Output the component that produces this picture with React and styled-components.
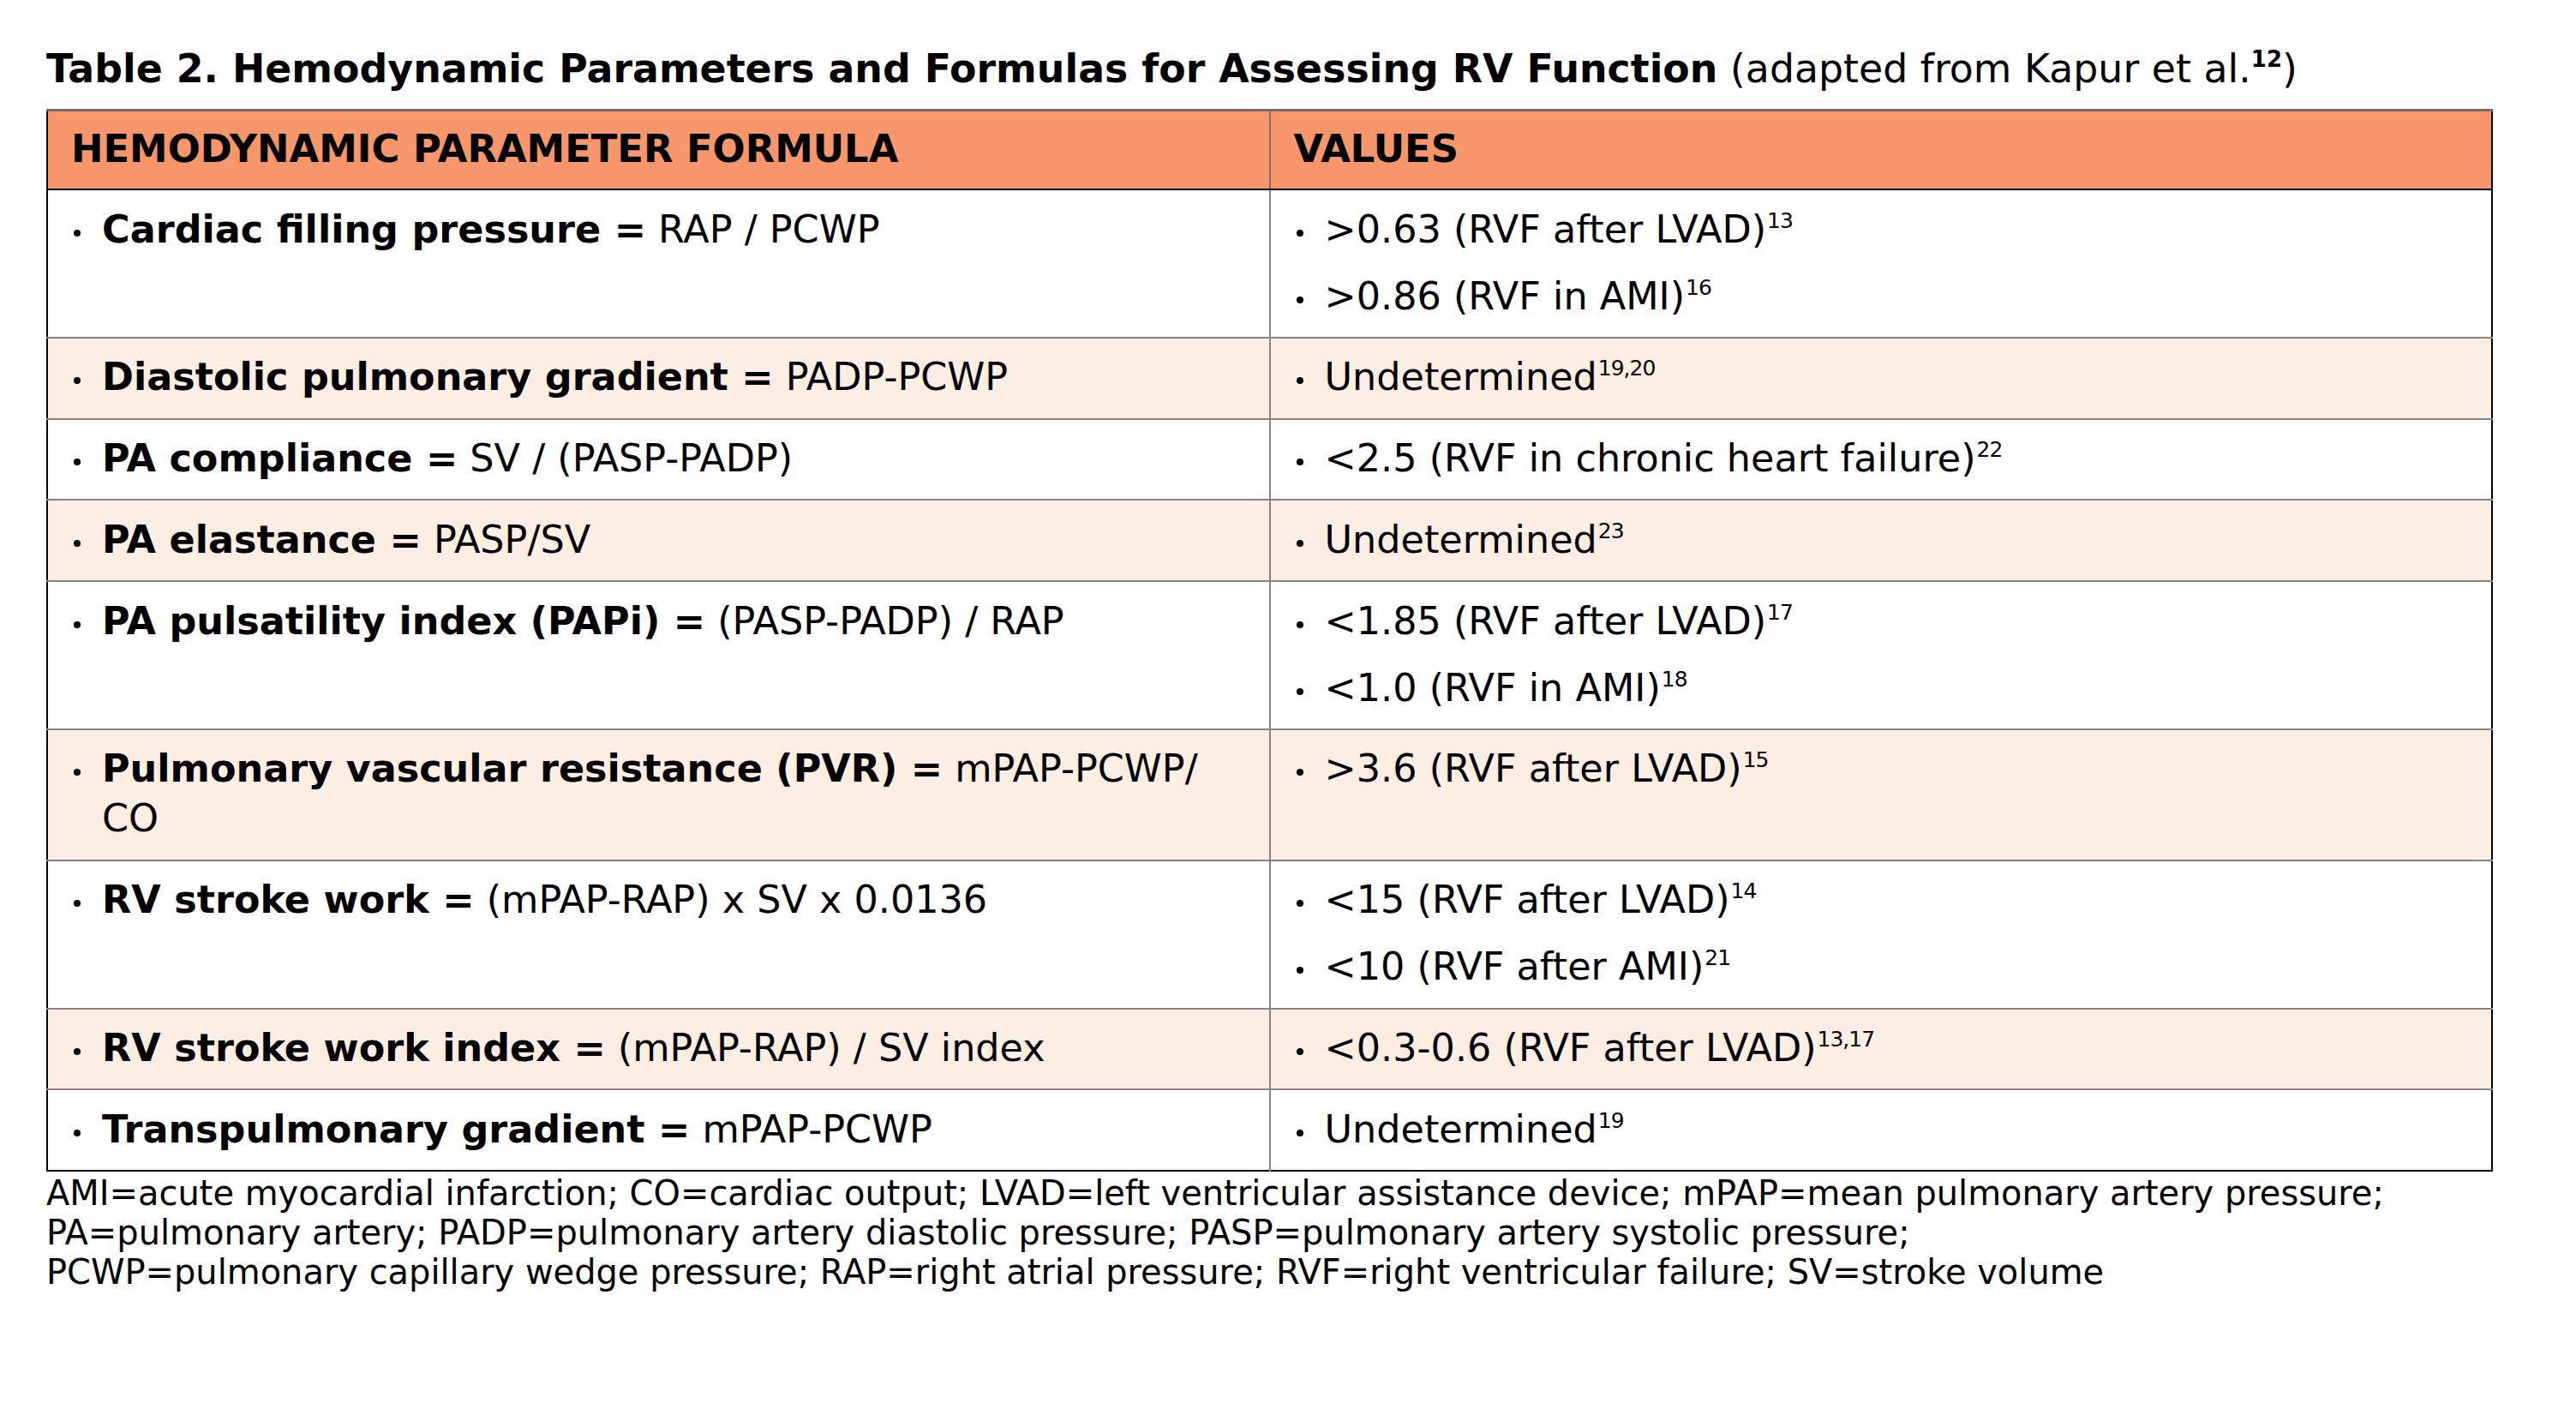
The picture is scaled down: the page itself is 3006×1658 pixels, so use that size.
import React from 'react';
import styled, { createGlobalStyle } from 'styled-components';

const rows = [
    {
        name: 'Cardiac filling pressure =',
        formula: 'RAP / PCWP',
        values: [
            { text: '>0.63 (RVF after LVAD)', ref: '13' },
            { text: '>0.86 (RVF in AMI)', ref: '16' },
        ],
    },
    {
        name: 'Diastolic pulmonary gradient =',
        formula: 'PADP-PCWP',
        values: [{ text: 'Undetermined', ref: '19,20' }],
    },
    {
        name: 'PA compliance =',
        formula: 'SV / (PASP-PADP)',
        values: [{ text: '<2.5 (RVF in chronic heart failure)', ref: '22' }],
    },
    {
        name: 'PA elastance =',
        formula: 'PASP/SV',
        values: [{ text: 'Undetermined', ref: '23' }],
    },
    {
        name: 'PA pulsatility index (PAPi) =',
        formula: '(PASP-PADP) / RAP',
        values: [
            { text: '<1.85 (RVF after LVAD)', ref: '17' },
            { text: '<1.0 (RVF in AMI)', ref: '18' },
        ],
    },
    {
        name: 'Pulmonary vascular resistance (PVR) =',
        formula: 'mPAP-PCWP/ CO',
        values: [{ text: '>3.6 (RVF after LVAD)', ref: '15' }],
    },
    {
        name: 'RV stroke work =',
        formula: '(mPAP-RAP) x SV x 0.0136',
        values: [
            { text: '<15 (RVF after LVAD)', ref: '14' },
            { text: '<10 (RVF after AMI)', ref: '21' },
        ],
    },
    {
        name: 'RV stroke work index =',
        formula: '(mPAP-RAP) / SV index',
        values: [{ text: '<0.3-0.6 (RVF after LVAD)', ref: '13,17' }],
    },
    {
        name: 'Transpulmonary gradient =',
        formula: 'mPAP-PCWP',
        values: [{ text: 'Undetermined', ref: '19' }],
    },
];

const notes = [
    'AMI=acute myocardial infarction; CO=cardiac output; LVAD=left ventricular assistance device; mPAP=mean pulmonary artery pressure;',
    'PA=pulmonary artery; PADP=pulmonary artery diastolic pressure; PASP=pulmonary artery systolic pressure;',
    'PCWP=pulmonary capillary wedge pressure; RAP=right atrial pressure; RVF=right ventricular failure; SV=stroke volume',
];

const App = () => {
    return (
        <>
            <GlobalStyle />
            <Page>
                <Title>
                    <strong>Table 2. Hemodynamic Parameters and Formulas for Assessing RV Function</strong>
                    {' '}(adapted from Kapur et al.<TitleRef>12</TitleRef>)
                </Title>
                <Table>
                    <thead>
                        <tr>
                            <HeadCell>Hemodynamic parameter formula</HeadCell>
                            <HeadCell $right>Values</HeadCell>
                        </tr>
                    </thead>
                    <tbody>
                        {rows.map((row, i) => (
                            <Row key={row.name} $striped={i % 2 === 1}>
                                <Cell>
                                    <List>
                                        <Item>
                                            <Bullet />
                                            <span>
                                                <strong>{row.name}</strong> {row.formula}
                                            </span>
                                        </Item>
                                    </List>
                                </Cell>
                                <Cell $right>
                                    <List>
                                        {row.values.map(value => (
                                            <Item key={value.text}>
                                                <Bullet />
                                                <span>
                                                    {value.text}
                                                    <Ref>{value.ref}</Ref>
                                                </span>
                                            </Item>
                                        ))}
                                    </List>
                                </Cell>
                            </Row>
                        ))}
                    </tbody>
                </Table>
                <Notes>
                    {notes.map(line => (
                        <NoteLine key={line}>{line}</NoteLine>
                    ))}
                </Notes>
            </Page>
        </>
    );
};

// Styling Components

const GlobalStyle = createGlobalStyle`
  html, body {
    margin: 0;
    padding: 0;
    background: #ffffff;
  }

  body {
    font-family: 'DejaVu Sans', 'Liberation Sans', sans-serif;
    color: #000;
  }
`;

const Page = styled.div`
  width: 2855px;
  padding: 54px 0 0 54px;
`;

const Title = styled.h1`
  margin: 0 0 20px;
  font-size: 45.8px;
  font-weight: 400;
  line-height: 53px;
  white-space: nowrap;

  strong {
    font-weight: 700;
  }
`;

const TitleRef = styled.sup`
  font-size: 26px;
  font-weight: 700;
  line-height: 0;
  vertical-align: baseline;
  position: relative;
  top: -18px;
`;

const Table = styled.table`
  width: 100%;
  border-collapse: collapse;
  table-layout: fixed;
  border-left: 2px solid #000;
  border-right: 2px solid #000;
  border-bottom: 2px solid #000;
`;

const HeadCell = styled.th`
  width: 50%;
  background-color: #f6966a;
  border-top: 3px solid #7d6a60;
  border-bottom: 2px solid #000;
  border-left: ${({ $right }) => ($right ? '2px solid #7d6a60' : 'none')};
  padding: 15px 28px 17px 27px;
  text-align: left;
  text-transform: uppercase;
  font-size: 44.8px;
  font-weight: 700;
  line-height: 58px;
`;

const Row = styled.tr`
  background-color: ${({ $striped }) => ($striped ? '#fdeee4' : '#ffffff')};
  border-top: 2px solid #858585;

  &:first-child {
    border-top: none;
  }
`;

const Cell = styled.td`
  vertical-align: top;
  padding: 16.5px 30px 18.3px 30px;
  border-left: ${({ $right }) => ($right ? '2px solid #858585' : 'none')};
  font-size: 44.5px;
  line-height: 58px;

  strong {
    font-weight: 700;
  }
`;

const List = styled.ul`
  list-style: none;
  margin: 0;
  padding: 0;
  display: flex;
  flex-direction: column;
  gap: 20px;
`;

const Item = styled.li`
  display: flex;
  align-items: flex-start;
`;

const Bullet = styled.span`
  flex: none;
  width: 8px;
  height: 8px;
  margin: 29px 25px 0 0;
  border-radius: 50%;
  background-color: #000;
`;

const Ref = styled.sup`
  font-size: 25px;
  line-height: 0;
  letter-spacing: -1px;
  vertical-align: baseline;
  position: relative;
  top: -17px;
  margin-left: 1px;
`;

const Notes = styled.div`
  padding-top: 2px;
  font-size: 39.95px;
  line-height: 46px;
`;

const NoteLine = styled.div`
  white-space: nowrap;
`;

export default App;
